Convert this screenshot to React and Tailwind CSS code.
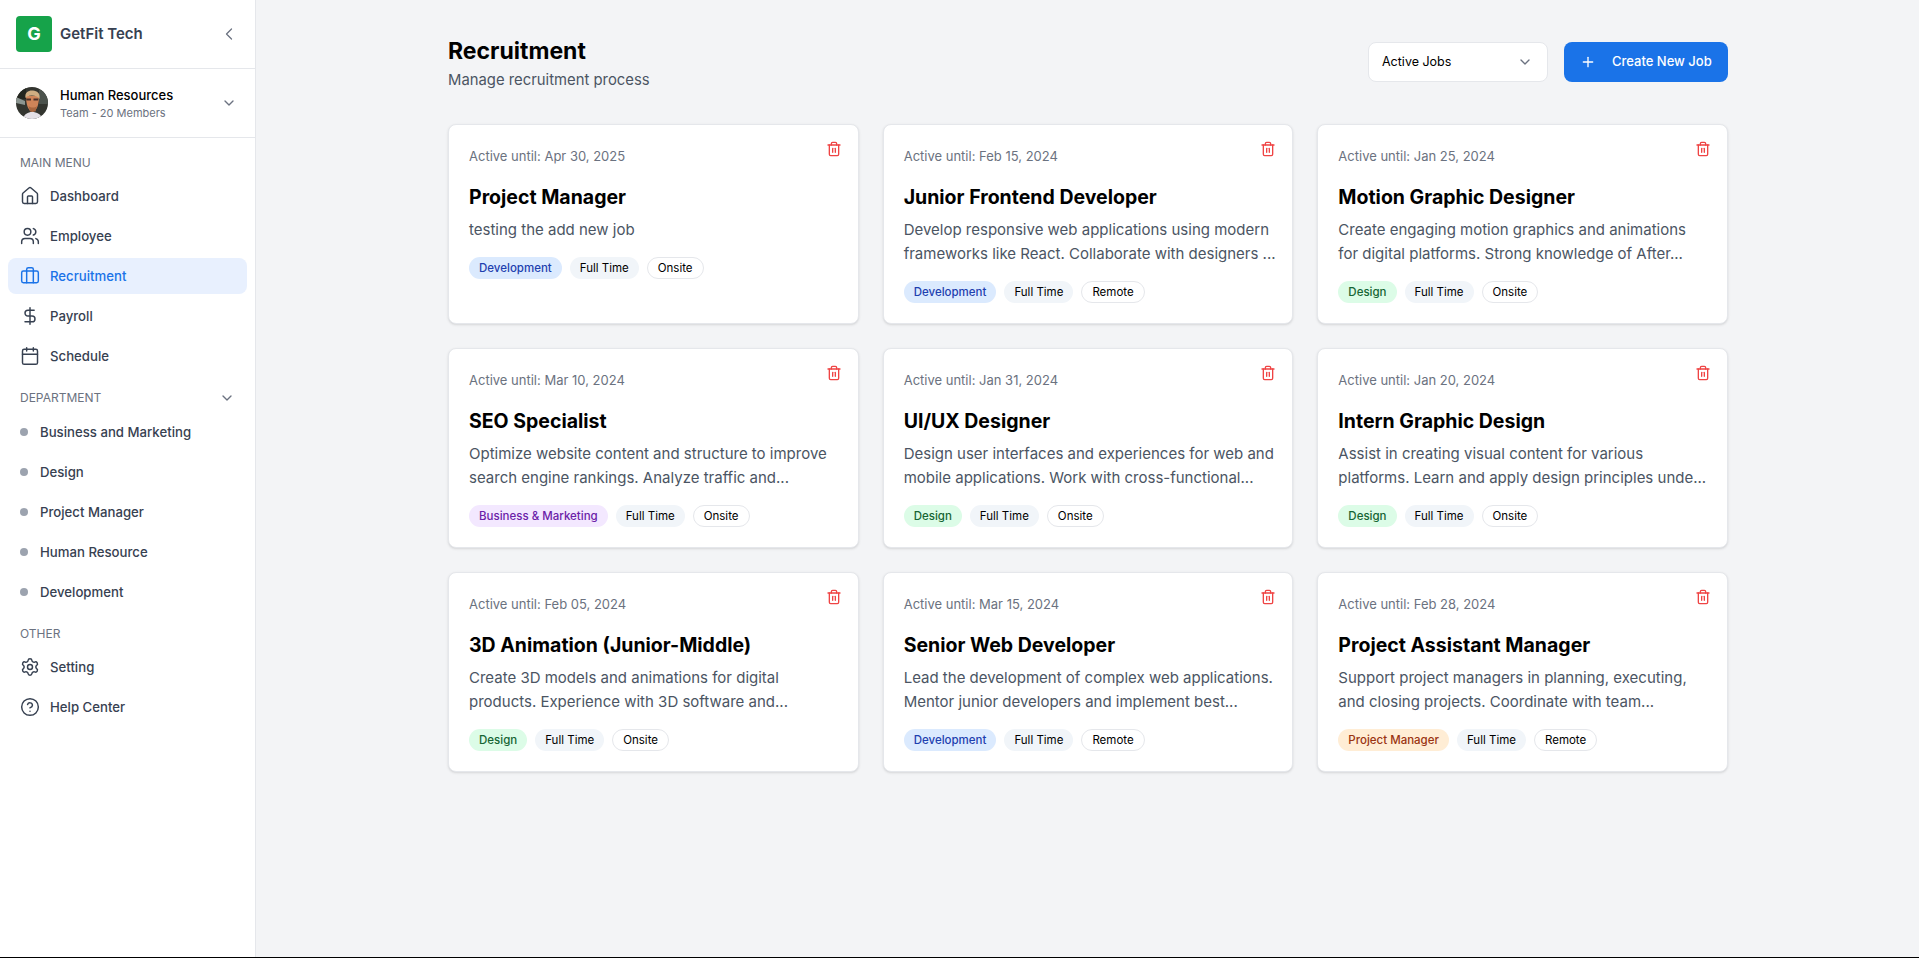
import {
  Briefcase,
  Calendar,
  ChevronDown,
  ChevronLeft,
  CircleHelp,
  DollarSign,
  House,
  Plus,
  Settings,
  Trash2,
  Users,
} from 'lucide-react'

const mainMenu = [
  { label: 'Dashboard', icon: House },
  { label: 'Employee', icon: Users },
  { label: 'Recruitment', icon: Briefcase, active: true },
  { label: 'Payroll', icon: DollarSign },
  { label: 'Schedule', icon: Calendar },
]

const departments = ['Business and Marketing', 'Design', 'Project Manager', 'Human Resource', 'Development']

const otherMenu = [
  { label: 'Setting', icon: Settings },
  { label: 'Help Center', icon: CircleHelp },
]

const tagColors = {
  Development: 'bg-[#dbeafe] text-[#1e40af]',
  Design: 'bg-[#dcfce7] text-[#166534]',
  'Business & Marketing': 'bg-[#f3e8ff] text-[#6b21a8]',
  'Project Manager': 'bg-[#ffedd5] text-[#9a3412]',
}

const jobs = [
  {
    until: 'Apr 30, 2025',
    title: 'Project Manager',
    lines: ['testing the add new job'],
    tag: 'Development',
    place: 'Onsite',
  },
  {
    until: 'Feb 15, 2024',
    title: 'Junior Frontend Developer',
    lines: ['Develop responsive web applications using modern', 'frameworks like React. Collaborate with designers ...'],
    tag: 'Development',
    place: 'Remote',
  },
  {
    until: 'Jan 25, 2024',
    title: 'Motion Graphic Designer',
    lines: ['Create engaging motion graphics and animations', 'for digital platforms. Strong knowledge of After...'],
    tag: 'Design',
    place: 'Onsite',
  },
  {
    until: 'Mar 10, 2024',
    title: 'SEO Specialist',
    lines: ['Optimize website content and structure to improve', 'search engine rankings. Analyze traffic and...'],
    tag: 'Business & Marketing',
    place: 'Onsite',
  },
  {
    until: 'Jan 31, 2024',
    title: 'UI/UX Designer',
    lines: ['Design user interfaces and experiences for web and', 'mobile applications. Work with cross-functional...'],
    tag: 'Design',
    place: 'Onsite',
  },
  {
    until: 'Jan 20, 2024',
    title: 'Intern Graphic Design',
    lines: ['Assist in creating visual content for various', 'platforms. Learn and apply design principles unde...'],
    tag: 'Design',
    place: 'Onsite',
  },
  {
    until: 'Feb 05, 2024',
    title: '3D Animation (Junior-Middle)',
    lines: ['Create 3D models and animations for digital', 'products. Experience with 3D software and...'],
    tag: 'Design',
    place: 'Onsite',
  },
  {
    until: 'Mar 15, 2024',
    title: 'Senior Web Developer',
    lines: ['Lead the development of complex web applications.', 'Mentor junior developers and implement best...'],
    tag: 'Development',
    place: 'Remote',
  },
  {
    until: 'Feb 28, 2024',
    title: 'Project Assistant Manager',
    lines: ['Support project managers in planning, executing,', 'and closing projects. Coordinate with team...'],
    tag: 'Project Manager',
    place: 'Remote',
  },
]

function Avatar() {
  return (
    <svg viewBox="0 0 32 32" className="h-8 w-8 shrink-0 rounded-full">
      <rect width="32" height="32" fill="#33352f" />
      <rect x="0" y="0" width="10" height="12" fill="#23261f" />
      <rect x="23" y="3" width="9" height="14" fill="#4b524c" />
      <path d="M0 10 L9 14 L9 18 L0 16 Z" fill="#8b9590" />
      <path d="M7 32 C8 27 12 25 16 25 C21 25 25 27 26 32 Z" fill="#e4e0e6" />
      <path d="M10 9 C10 17 12 24 16.5 25 C21 24 23 17 23 9 Z" fill="#cf8458" />
      <path d="M9.5 11 C8.5 5 13 3 17 3.5 C21 4 24.5 6 23.5 12 C22 8.5 15 7.5 11 9.5 Z" fill="#d0ae82" />
      <path d="M10 11.5 L15 11.5 L15 13.5 L10.5 13.5 Z M17.5 11.5 L22.5 11.5 L22 13.5 L17.5 13.5 Z" fill="#4a3128" />
      <path d="M12.5 19 C15 21 19 21 21 19 L19.5 24.5 L14 24.5 Z" fill="#a8663f" />
    </svg>
  )
}

function NavItem({ item }) {
  const Icon = item.icon
  return (
    <a
      href="#"
      className={`flex h-9 items-center gap-2.5 rounded-lg px-3 text-[13.2px] font-medium ${
        item.active ? 'bg-[#e8f0fe] text-[#1a73e8]' : 'text-[#374151]'
      }`}
    >
      <Icon className="h-5 w-5 shrink-0" strokeWidth={1.75} />
      <span className="mt-0.5">{item.label}</span>
    </a>
  )
}

function Sidebar() {
  return (
    <aside className="w-64 shrink-0 border-r border-[#e5e7eb] bg-white">
      <div className="flex items-center justify-between border-b border-[#e5e7eb] p-4">
        <div className="flex items-center gap-2">
          <div className="flex h-9 w-9 items-center justify-center rounded bg-[#16a34a] text-lg font-bold text-white">G</div>
          <span className="text-[15px] font-semibold text-[#374151]">GetFit Tech</span>
        </div>
        <ChevronLeft className="h-5 w-5 text-[#6b7280]" strokeWidth={1.5} />
      </div>

      <div className="flex h-[69px] items-center justify-between border-b border-[#e5e7eb] px-4">
        <div className="flex items-center gap-3">
          <Avatar />
          <div className="mt-0.5">
            <p className="text-[13px] leading-[18px] font-medium text-black">Human Resources</p>
            <p className="text-[11px] leading-[18px] text-[#6b7280]">Team - 20 Members</p>
          </div>
        </div>
        <ChevronDown className="mr-0.5 h-4 w-4 text-[#6b7280]" />
      </div>

      <nav className="space-y-4 px-2 pt-4">
        <div>
          <h3 className="mt-px mb-[7px] px-3 text-xs text-[#6b7280] uppercase">Main Menu</h3>
          <div className="space-y-1">
            {mainMenu.map((item) => (
              <NavItem key={item.label} item={item} />
            ))}
          </div>
        </div>

        <div>
          <div className="mb-2 flex items-center justify-between px-3">
            <h3 className="text-xs text-[#6b7280] uppercase">Department</h3>
            <ChevronDown className="h-4 w-4 text-[#6b7280]" />
          </div>
          <div className="space-y-1">
            {departments.map((name) => (
              <a key={name} href="#" className="flex h-9 items-center gap-3 rounded-lg px-3 text-[13.2px] font-medium text-[#374151]">
                <span className="h-2 w-2 rounded-full bg-[#9ca3af]" />
                <span className="mt-0.5">{name}</span>
              </a>
            ))}
          </div>
        </div>

        <div>
          <h3 className="mt-0.5 mb-[7px] px-3 text-xs text-[#6b7280] uppercase">Other</h3>
          <div className="space-y-1">
            {otherMenu.map((item) => (
              <NavItem key={item.label} item={item} />
            ))}
          </div>
        </div>
      </nav>
    </aside>
  )
}

function JobCard({ job }) {
  return (
    <div className="relative h-[200px] rounded-lg border border-[#e5e7eb] bg-white p-5 pt-[21px] shadow-sm">
      <button className="absolute top-4 right-4 text-[#ef4444]">
        <Trash2 className="h-4 w-4" />
      </button>
      <p className="text-[13px] leading-5 text-[#6b7280]">Active until: {job.until}</p>
      <h2 className="mt-[17px] text-[19.5px] leading-7 font-bold text-black">{job.title}</h2>
      <p className="mt-[7px] text-[15px] leading-6 text-[#4b5563]">
        {job.lines.map((line) => (
          <span key={line} className="block whitespace-nowrap">
            {line}
          </span>
        ))}
      </p>
      <div className="mt-[15px] flex gap-2 text-[11.5px] leading-5">
        <span className={`rounded-full px-2.5 py-px font-medium ${tagColors[job.tag]}`}>{job.tag}</span>
        <span className="rounded-full bg-[#f1f5f9] px-2.5 py-px text-black">Full Time</span>
        <span className="rounded-full border border-[#e5e7eb] bg-white px-2.5 text-black">{job.place}</span>
      </div>
    </div>
  )
}

export default function App() {
  return (
    <div className="flex h-[958px] overflow-hidden border-b border-black bg-[#f3f4f6] font-['Inter',sans-serif]">
      <Sidebar />
      <main className="flex-1 py-8 pl-px">
        <div className="mx-auto w-[1280px]">
          <div className="mb-8 flex items-start justify-between">
            <div>
              <h1 className="mt-[3px] text-[23px] leading-8 font-bold text-black">Recruitment</h1>
              <p className="mt-px text-[14.85px] leading-6 text-[#4b5563]">Manage recruitment process</p>
            </div>
            <div className="mt-2.5 flex gap-4">
              <div className="flex h-10 w-[180px] items-center justify-between rounded-lg border border-[#e5e7eb] bg-white pr-3.5 pl-[13px] text-[12.5px] text-black">
                Active Jobs
                <ChevronDown className="h-4 w-4 text-[#6b7280]" />
              </div>
              <button className="flex h-10 w-[164px] items-center gap-4 rounded-lg bg-[#1a73e8] px-4 text-[13px] font-medium text-white">
                <Plus className="h-4 w-4" />
                Create New Job
              </button>
            </div>
          </div>

          <div className="grid grid-cols-3 gap-6">
            {jobs.map((job) => (
              <JobCard key={job.title} job={job} />
            ))}
          </div>
        </div>
      </main>
    </div>
  )
}
